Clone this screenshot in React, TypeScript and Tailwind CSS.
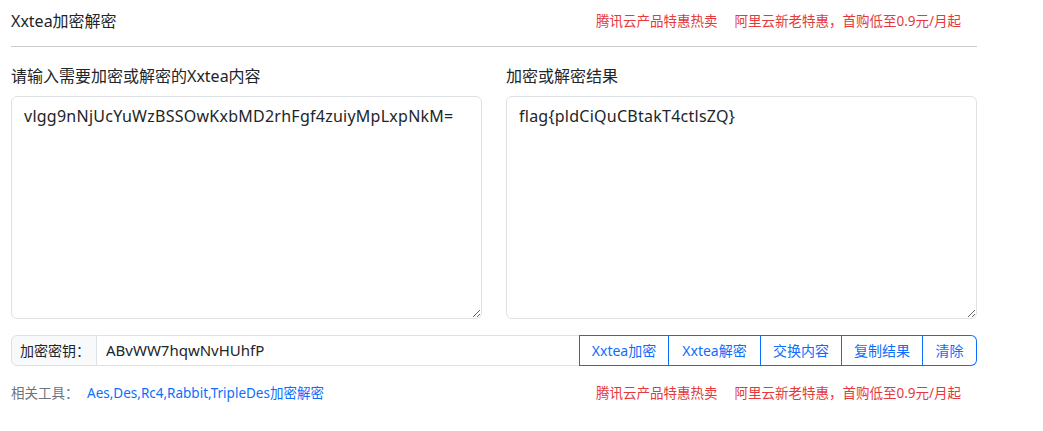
import React from "react";

export default function App() {
  return (
    <div
      className="w-[988px] pl-[11px] pr-[11px] bg-white text-[#212529] font-['Noto_Sans','Noto_Sans_CJK_SC',sans-serif]"
    >
      <div className="flex items-center justify-between h-[42px]">
        <div className="text-[16px] leading-[20px] text-[#212529]">Xxtea加密解密</div>
        <div className="flex gap-[17px] pr-[16px] text-[13.5px] leading-[20px] text-[#e4393c]">
          <span>腾讯云产品特惠热卖</span>
          <span>阿里云新老特惠，首购低至0.9元/月起</span>
        </div>
      </div>
      <div className="mt-[4px] border-t border-[#ccc]" />
      <div className="grid grid-cols-2 gap-[24px] mt-[18px]">
        <div className="flex flex-col">
          <label className="text-[16px] leading-[22px] mb-[9px]">请输入需要加密或解密的Xxtea内容</label>
          <textarea
            className="h-[223px] w-full rounded-[6px] border border-[#dee2e6] px-[12px] py-[8px] text-[16px] tracking-[0.25px] leading-[23px] text-[#212529] outline-none"
            defaultValue="vlgg9nNjUcYuWzBSSOwKxbMD2rhFgf4zuiyMpLxpNkM="
          />
        </div>
        <div className="flex flex-col">
          <label className="text-[16px] leading-[22px] mb-[9px]">加密或解密结果</label>
          <textarea
            className="h-[223px] w-full rounded-[6px] border border-[#dee2e6] px-[12px] py-[8px] text-[16px] tracking-[0.25px] leading-[23px] text-[#212529] outline-none"
            defaultValue="flag{pldCiQuCBtakT4ctlsZQ}"
          />
        </div>
      </div>
      <div className="mt-[16px] flex h-[31px]">
        <div className="flex items-center w-[86px] rounded-l-[6px] border border-[#dee2e6] bg-[#f8f9fa] pl-[8px] text-[14px] text-[#212529]">
          加密密钥：
        </div>
        <input
          className="flex-1 min-w-0 border-y border-[#dee2e6] px-[9px] text-[15px] text-[#212529] outline-none"
          defaultValue="ABvWW7hqwNvHUhfP"
        />
        <button className="w-[90px] border border-[#0d6efd] text-[14px] text-[#0d6efd] bg-white">Xxtea加密</button>
        <button className="w-[92px] border border-l-0 border-[#0d6efd] text-[14px] text-[#0d6efd] bg-white">Xxtea解密</button>
        <button className="w-[81px] border border-l-0 border-[#0d6efd] text-[14px] text-[#0d6efd] bg-white">交换内容</button>
        <button className="w-[81px] border border-l-0 border-[#0d6efd] text-[14px] text-[#0d6efd] bg-white">复制结果</button>
        <button className="w-[54px] border border-l-0 border-[#0d6efd] rounded-r-[6px] text-[14px] text-[#0d6efd] bg-white">清除</button>
      </div>
      <div className="mt-[17px] flex items-center justify-between h-[20px]">
        <div className="flex items-center text-[13.5px]">
          <span className="text-[#6c757d] w-[76px]">相关工具：</span>
          <a className="text-[#0d6efd]">Aes,Des,Rc4,Rabbit,TripleDes加密解密</a>
        </div>
        <div className="flex gap-[17px] pr-[16px] text-[13.5px] leading-[20px] text-[#e4393c]">
          <span>腾讯云产品特惠热卖</span>
          <span>阿里云新老特惠，首购低至0.9元/月起</span>
        </div>
      </div>
    </div>
  );
}
